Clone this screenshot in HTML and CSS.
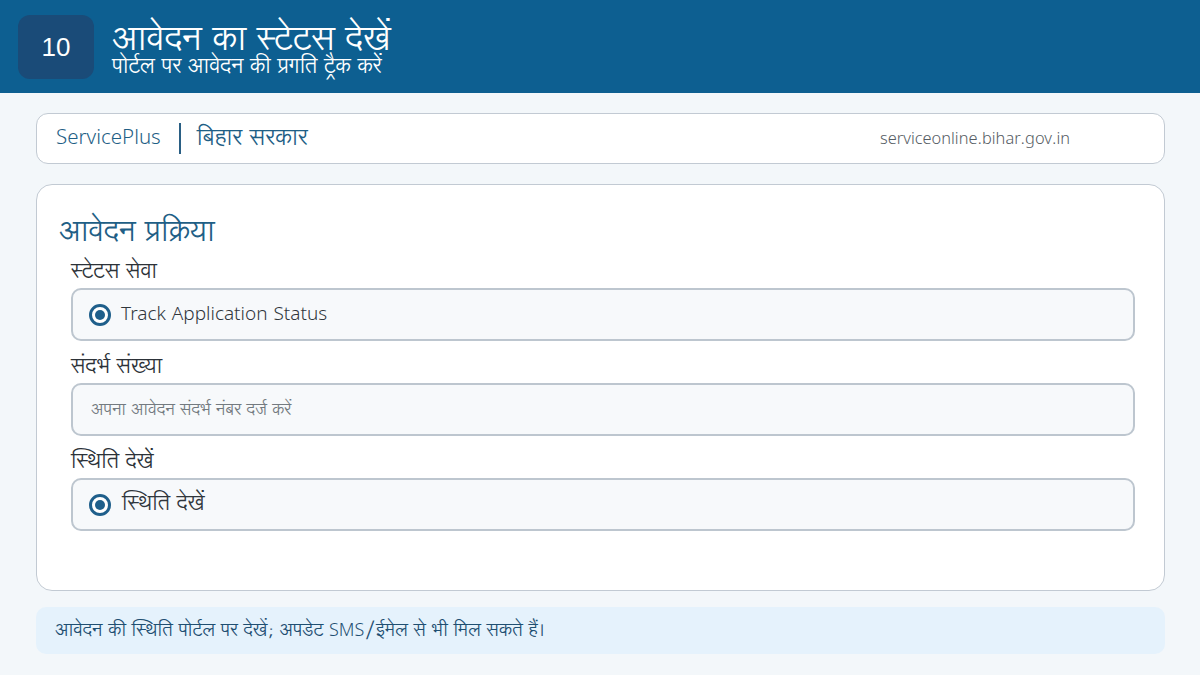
FILE: index.html
```html
<!DOCTYPE html>
<html lang="hi">
<head>
<meta charset="utf-8">
<link rel="stylesheet" href="styles.css">
</head>
<body>
<header class="hero">
  <div class="badge">10</div>
  <div class="titles">
    <div class="title">आवेदन का स्टेटस देखें</div>
    <div class="subtitle">पोर्टल पर आवेदन की प्रगति ट्रैक करें</div>
  </div>
</header>
<main class="content">
  <div class="topbar">
    <span class="brand">ServicePlus</span>
    <span class="divider"></span>
    <span class="gov">बिहार सरकार</span>
    <span class="url">serviceonline.bihar.gov.in</span>
  </div>
  <section class="card">
    <h2 class="card-title">आवेदन प्रक्रिया</h2>
    <div class="label">स्टेटस सेवा</div>
    <div class="field">
      <span class="radio"></span>
      <span class="field-text latin">Track Application Status</span>
    </div>
    <div class="label">संदर्भ संख्या</div>
    <div class="field input">
      <span class="placeholder">अपना आवेदन संदर्भ नंबर दर्ज करें</span>
    </div>
    <div class="label">स्थिति देखें</div>
    <div class="field">
      <span class="radio"></span>
      <span class="field-text">स्थिति देखें</span>
    </div>
  </section>
  <div class="note">आवेदन की स्थिति पोर्टल पर देखें; अपडेट SMS/ईमेल से भी मिल सकते हैं।</div>
</main>
</body>
</html>
```
FILE: styles.css
```css
* { box-sizing: border-box; }
html, body { margin: 0; padding: 0; }
body {
  width: 1200px;
  height: 675px;
  overflow: hidden;
  background: #f3f7fa;
  font-family: "Lohit Devanagari", "Noto Sans", sans-serif;
  font-weight: 300;
}
.hero {
  height: 93px;
  background: #0d5f91;
  display: flex;
  align-items: center;
  padding-left: 18px;
  gap: 18px;
}
.badge {
  width: 76px;
  height: 64px;
  border-radius: 12px;
  background: #1a4b78;
  color: #fff;
  font-family: "Liberation Sans", Arial, sans-serif;
  font-weight: 400;
  font-size: 26px;
  display: flex;
  align-items: center;
  justify-content: center;
  margin-top: 1px;
}
.titles { color: #fff; display: flex; flex-direction: column; margin-top: 6px; }
.title { font-size: 34px; line-height: 38px; }
.subtitle { font-size: 21px; line-height: 22px; margin-top: -3px; }
.content {
  padding: 20px 35px 0 36px;
  display: flex;
  flex-direction: column;
}
.topbar {
  height: 51px;
  background: #fff;
  border: 1.5px solid #c2cad3;
  border-radius: 12px;
  display: flex;
  align-items: center;
  padding-left: 19px;
}
.brand { color: #1f5f86; font-size: 20.5px; }
.divider {
  width: 2px;
  height: 31px;
  background: #2a5f84;
  margin: 0 16px 0 18px;
}
.gov { color: #1f5f86; font-size: 23px; }
.url {
  margin-left: auto;
  margin-right: 94px;
  color: #555c63;
  font-size: 16.4px;
}
.card {
  margin-top: 20px;
  height: 407px;
  background: #fff;
  border: 1.5px solid #c2cad3;
  border-radius: 16px;
  padding: 28px 29px 0 34px;
}
.card-title {
  margin: 0 0 0 -12px;
  font-weight: normal;
  color: #1f5f86;
  font-size: 29px;
  line-height: 40px;
}
.label {
  color: #2c3238;
  font-size: 21px;
  line-height: 30px;
  margin-top: 11px;
  margin-bottom: 1px;
}
.card-title + .label { margin-top: 4px; }
.field {
  height: 53px;
  background: #f7f9fb;
  border: 2px solid #bdc6cf;
  border-radius: 10px;
  display: flex;
  align-items: center;
  padding-left: 16px;
}
.radio {
  width: 22px;
  height: 22px;
  border-radius: 50%;
  border: 3px solid #1f5f8b;
  background: #fff;
  position: relative;
  flex: none;
}
.radio::after {
  content: "";
  position: absolute;
  left: 3px;
  top: 3px;
  width: 10px;
  height: 10px;
  border-radius: 50%;
  background: #1f5f8b;
}
.field-text { margin-left: 11px; color: #30363c; font-size: 21px; }
.field-text.latin { font-size: 19px; margin-left: 10px; }
.input { padding-left: 18px; }
.placeholder { color: #737a80; font-size: 16.6px; }
.note {
  margin-top: 16px;
  height: 47px;
  background: #e5f2fc;
  border-radius: 10px;
  display: flex;
  align-items: center;
  padding-left: 19px;
  color: #1f4f72;
  font-size: 18px;
}
```
